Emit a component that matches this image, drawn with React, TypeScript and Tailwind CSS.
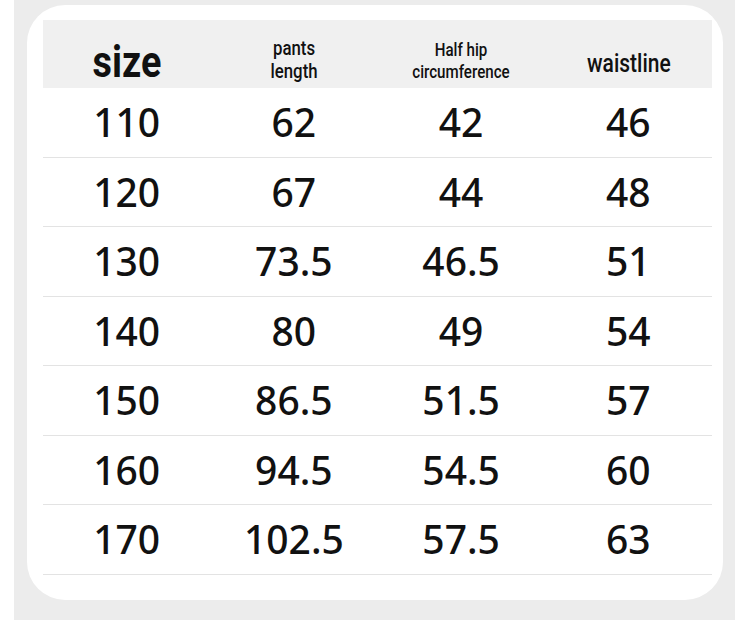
import React from "react";

const rows = [
  ["110", "62", "42", "46"],
  ["120", "67", "44", "48"],
  ["130", "73.5", "46.5", "51"],
  ["140", "80", "49", "54"],
  ["150", "86.5", "51.5", "57"],
  ["160", "94.5", "54.5", "60"],
  ["170", "102.5", "57.5", "63"],
];

export default function App() {
  return (
    <div className="w-[750px] h-[620px] bg-white flex overflow-hidden">
      <div className="ml-[14px] w-[721px] h-[620px] bg-[#ececec] pt-[5px] pl-[13px]">
        <div className="w-[696px] h-[595px] rounded-[38px] bg-white pt-[15px] pl-[16px] pr-[11px]">
          <div className="h-[68px] bg-[#f0f0f0] grid grid-cols-4 text-[#111] font-['Roboto',sans-serif]">
            <div className="flex justify-center pt-[20px]">
              <span className="inline-block scale-x-[0.84] text-[45px] leading-[44px] font-bold">size</span>
            </div>
            <div className="flex justify-center pt-[17px]">
              <span className="inline-block scale-x-[0.84] text-[20px] leading-[23px] font-medium text-center">
                pants
                <br />
                length
              </span>
            </div>
            <div className="flex justify-center pt-[19px]">
              <span className="inline-block scale-x-[0.84] text-[18px] leading-[22px] font-medium text-center">
                Half hip
                <br />
                circumference
              </span>
            </div>
            <div className="flex justify-center pt-[32px]">
              <span className="inline-block scale-x-[0.84] text-[25px] leading-[24px] font-medium">waistline</span>
            </div>
          </div>
          {rows.map((r, i) => (
            <div
              key={i}
              className="h-[69.5px] grid grid-cols-4 border-b-[1.5px] border-[#e3e3e3] text-[#111] font-['Noto_Sans',sans-serif] text-[39px] font-medium"
            >
              {r.map((c, j) => (
                <div key={j} className="flex items-center justify-center">
                  {c}
                </div>
              ))}
            </div>
          ))}
        </div>
      </div>
    </div>
  );
}
